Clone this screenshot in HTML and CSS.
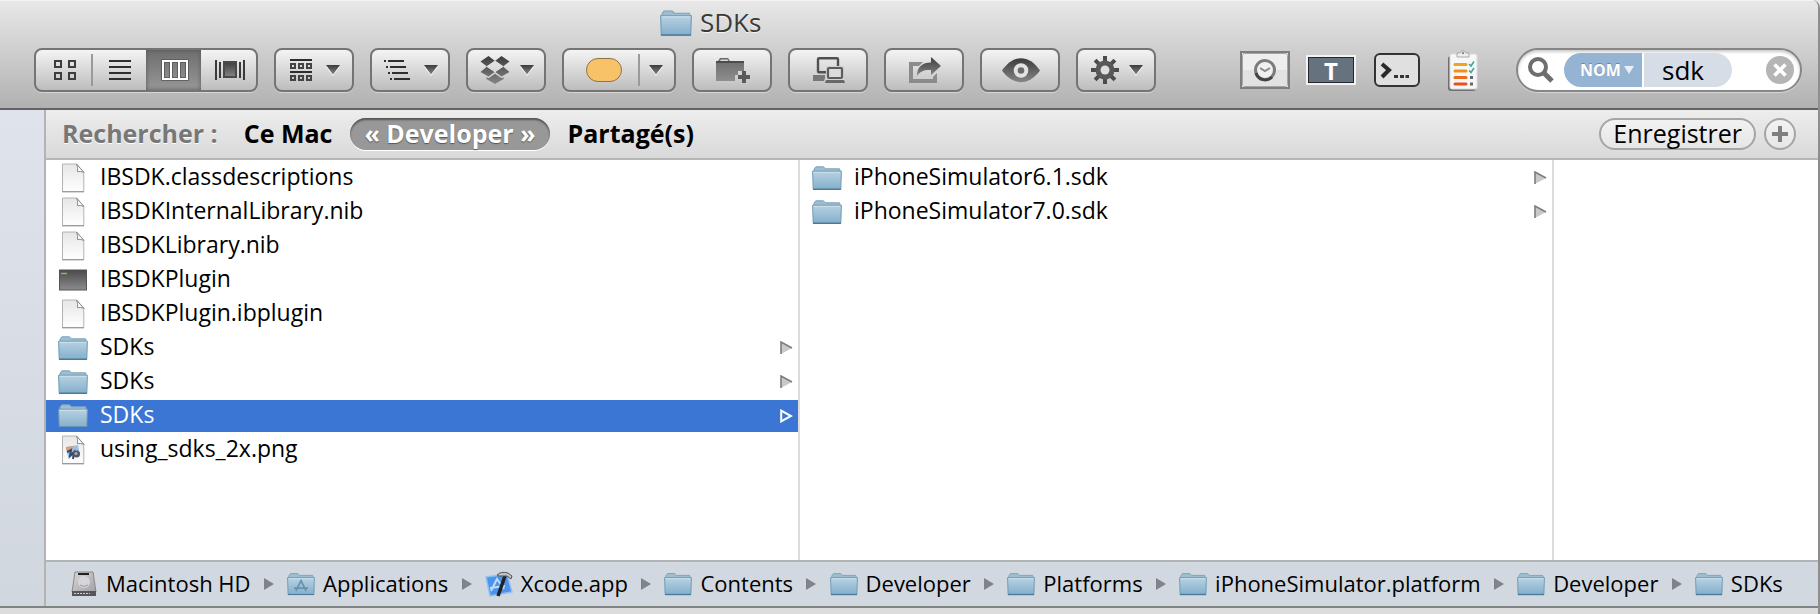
FILE: index.html
```html
<!DOCTYPE html>
<html lang="fr">
<head>
<meta charset="utf-8">
<title>SDKs</title>
<link rel="stylesheet" href="styles.css">
</head>
<body>
<svg class="defs" width="0" height="0" aria-hidden="true">
  <defs>
    <linearGradient id="g-folder" x1="0" y1="0" x2="0" y2="1"><stop offset="0" stop-color="#b7d2e3"/><stop offset="1" stop-color="#84afca"/></linearGradient>
    <linearGradient id="g-page" x1="0" y1="0" x2="0" y2="1"><stop offset="0" stop-color="#e6e6e6"/><stop offset="1" stop-color="#ffffff"/></linearGradient>
    <linearGradient id="g-ink" x1="0" y1="0" x2="0" y2="1"><stop offset="0" stop-color="#3c3c3c"/><stop offset="1" stop-color="#868686"/></linearGradient>
    <linearGradient id="g-soft" x1="0" y1="0" x2="0" y2="1"><stop offset="0" stop-color="#6a6a6a"/><stop offset="1" stop-color="#8e8e8e"/></linearGradient>
    <linearGradient id="g-exec" x1="0" y1="0" x2="0" y2="1"><stop offset="0" stop-color="#4a4a4a"/><stop offset="1" stop-color="#8c8c8c"/></linearGradient>
    <linearGradient id="g-disk" x1="0" y1="0" x2="1" y2="1"><stop offset="0" stop-color="#d8d8da"/><stop offset="1" stop-color="#a2a2a6"/></linearGradient>
    <symbol id="folder" viewBox="0 0 30 24">
      <path d="M2 6V3.2L3.8 .8H11.5L13.4 2.8H27.6L28.4 6Z" fill="#9dbdd0" stroke="#7da3ba"/>
      <path d="M.6 5.2H29.4L28.8 23.2H1.2Z" fill="url(#g-folder)" stroke="#6d9ab5"/>
      <path d="M1.6 6.3H28.4" stroke="#cfe1ec"/>
      <path d="M1 23.3H29" stroke="#477a9b" stroke-width="1.4"/>
    </symbol>
    <symbol id="page" viewBox="0 0 24 30">
      <path d="M1.500 1H15.500L22.800 9V28.600H1.500Z" fill="url(#g-page)" stroke="#b4b4b4"/>
      <path d="M1.200 28.800H23" stroke="#8f8f8f"/>
      <path d="M15.500 1Q17.400 5 16.400 8.600Q20 8 22.800 9.400Z" fill="#fff" stroke="#8d8d8d"/>
    </symbol>
    <symbol id="down" viewBox="0 0 14 11">
      <path d="M0 1.800H14L7 11Z" fill="#f4f4f4"/><path d="M0 0H14L7 9.500Z" fill="url(#g-ink)"/>
    </symbol>
    <symbol id="branch" viewBox="0 0 13 14">
      <path d="M1 1V13L12 7Z" fill="#c9c9c9"/><path d="M1 13V1L12 7" fill="none" stroke="#7d7d7d" stroke-width="1.600"/>
    </symbol>
    <symbol id="branch-on" viewBox="0 0 13 14"><path d="M1.200 1.600V12.400L11 7Z" fill="none" stroke="#fff" stroke-width="2"/></symbol>
    <symbol id="sep" viewBox="0 0 10 12"><path d="M0 0V12L10 6Z" fill="#808489"/></symbol>
  </defs>
</svg>

<main class="window">
  <header class="header">
    <h1 class="title"><svg class="title-icon"><use href="#folder"/></svg><span class="title-text">SDKs</span></h1>
    <div class="toolbar">
      <div class="tools">
        <div class="group" role="group" aria-label="Présentation">
          <button class="seg" aria-label="Icônes"><svg width="24" height="22" viewBox="0 0 24 22"><g fill="none" stroke="#3d3d3d" stroke-width="2"><path d="M2 2H8V8H2ZM16 2H22V8H16ZM2 14H8V20H2ZM16 14H22V20H16Z"/></g></svg></button>
          <button class="seg seg-rule" aria-label="Liste"><svg width="22" height="22" viewBox="0 0 22 22"><path d="M0 2H22M0 8H22M0 14H22M0 20H22" stroke="#2e2e2e" stroke-width="2"/></svg></button>
          <button class="seg seg-on" aria-label="Colonnes" aria-pressed="true"><svg width="28" height="22" viewBox="0 0 28 22"><path d="M2 2H26V20H2ZM10 2V20M18 2V20" fill="none" stroke="#555" stroke-width="3.600"/><path d="M2 2H26V20H2ZM10 2V20M18 2V20" fill="none" stroke="#fff" stroke-width="2"/></svg></button>
          <button class="seg" aria-label="Cover Flow"><svg width="30" height="22" viewBox="0 0 30 22"><path d="M1 1V21M5 3V19M25 3V19M29 1V21" stroke="#3a3a3a" stroke-width="2"/><path d="M9 3H21V18H9Z" fill="url(#g-ink)" stroke="#4a4a4a" stroke-width="2"/></svg></button>
        </div>
        <button class="tool" aria-label="Disposition" aria-haspopup="menu"><svg width="22" height="24" viewBox="0 0 22 24"><path d="M0 2H22M0 14H22" stroke="#2e2e2e" stroke-width="2"/><path d="M1 6H5V10H1ZM9 6H13V10H9ZM17 6H21V10H17ZM1 18H5V22H1ZM9 18H13V22H9ZM17 18H21V22H17Z" fill="none" stroke="#444" stroke-width="2"/></svg><svg class="down"><use href="#down"/></svg></button>
        <button class="tool" aria-label="Tri" aria-haspopup="menu"><svg width="26" height="22" viewBox="0 0 26 22"><path d="M0 2H2M4 2H20M2 8H4M6 8H22M4 14H6M8 14H24M6 20H8M10 20H26" stroke="#2e2e2e" stroke-width="2"/></svg><svg class="down"><use href="#down"/></svg></button>
        <button class="tool tool-tight" aria-label="Dropbox" aria-haspopup="menu"><svg width="30" height="28" viewBox="0 0 30 28"><g fill="url(#g-ink)"><path d="M8.500 0L15 5L7 10.500L.5 5.500ZM21.500 0L29.500 5.500L23 10.500L15 5ZM.5 16L7 10.500L15 15.800L8.500 20.500ZM23 10.500L29.500 16L21.500 20.500L15 15.800ZM6.500 21.300L8.600 22.300L15 17.800L21.500 22.300L23.600 21.300V23L15 28L6.500 23Z"/></g><path d="M7 10.500L15 5L23 10.500M7 10.500L15 15.800L23 10.500" fill="none" stroke="#e4e4e4"/></svg><svg class="down"><use href="#down"/></svg></button>
        <div class="group">
          <button class="seg seg-wide" aria-label="Étiquette"><span class="tag"></span></button>
          <button class="seg seg-menu seg-rule" aria-label="Choisir une étiquette" aria-haspopup="menu"><svg class="down"><use href="#down"/></svg></button>
        </div>
        <button class="tool" aria-label="Nouveau dossier"><svg width="34" height="27" viewBox="0 0 34 27"><path d="M0 24V4H2L4 1H12L14 4H28V14H22V18H19V24Z" fill="url(#g-soft)"/><path d="M3 5L5 2.500H11.500L13 5Z" fill="#d8d8d8"/><path d="M0 5H28" stroke="#4c4c4c" stroke-width="2"/><path d="M26 14H30V18H34V22H30V26H26V22H22V18H26Z" fill="#5a5a5a"/></svg></button>
        <button class="tool" aria-label="Se connecter"><svg width="32" height="27" viewBox="0 0 32 27"><rect x="5" y="1.200" width="20" height="14" rx="1" fill="none" stroke="#505050" stroke-width="2.400"/><rect x="13" y="9" width="18" height="16" fill="#d2d2d2"/><rect x="15" y="11" width="14" height="10" rx="1" fill="#dcdcdc" stroke="#5c5c5c" stroke-width="2.200"/><path d="M0 18H12V21L11 24H0Z" fill="#787878"/><path d="M13 23H31L32 26H12Z" fill="#686868"/></svg></button>
        <button class="tool" aria-label="Partager"><svg width="32" height="27" viewBox="0 0 32 27"><path d="M14 5H0V26H28V16L24 20V22H4V9H10Z" fill="#8b8b8b"/><path d="M8 19C8 10 13 5.500 22 5.500V0L32 9L22 18V13C16 12.500 11 14 8 19Z" fill="url(#g-ink)"/></svg></button>
        <button class="tool" aria-label="Coup d’œil"><svg width="38" height="25" viewBox="0 0 38 25"><path d="M0 12.500C11-4 27-4 38 12.500C27 28 11 28 0 12.500Z" fill="url(#g-ink)"/><circle cx="19" cy="12.500" r="5.300" fill="#6b6b6b" stroke="#e2e2e2" stroke-width="4"/></svg></button>
        <button class="tool tool-tight" aria-label="Action" aria-haspopup="menu"><svg width="28" height="28" viewBox="-14 -14 28 28"><g fill="#4c4c4c"><path id="tooth" d="M-2-14H2V14H-2Z"/><use href="#tooth" transform="rotate(45)"/><use href="#tooth" transform="rotate(90)"/><use href="#tooth" transform="rotate(135)"/><circle r="9.500" fill="#585858"/></g><circle r="4.500" fill="#dedede"/></svg><svg class="down"><use href="#down"/></svg></button>
      </div>
      <div class="extras">
        <button class="plain" aria-label="Time Machine"><svg width="50" height="38" viewBox="0 0 50 38"><rect x="1" y="1" width="48" height="36" fill="#eee" stroke="#7e7e7e" stroke-width="2"/><rect x="2.500" y="2.500" width="45" height="33" rx="2" fill="none" stroke="#a6a6a6"/><rect x="3" y="19" width="44" height="16" fill="#e2e2e2"/><circle cx="25" cy="19" r="9.500" fill="#f0f0f0" stroke="#7c7c7c" stroke-width="3"/><path d="M16 22A9.500 9.500 0 0 0 32 26" fill="none" stroke="#444" stroke-width="3"/><path d="M20 17L25 20L30 17" fill="none" stroke="#8a8a8a" stroke-width="2"/></svg></button>
        <button class="plain plain-text" aria-label="Texte">T</button>
        <button class="plain plain-term" aria-label="Terminal"><svg width="46" height="34" viewBox="0 0 46 34"><rect x="1" y="1" width="44" height="32" rx="5" fill="#e0e0e0" stroke="#333" stroke-width="2"/><path d="M8 11L15 17L8 24" fill="none" stroke="#2a2a2a" stroke-width="4"/><path d="M20 23.500H24M26 23.500H30M31.500 23.500H35" stroke="#333" stroke-width="3"/></svg></button>
        <button class="plain plain-list" aria-label="Tâches"><svg width="30" height="43" viewBox="0 0 30 43"><rect x="0" y="7" width="28" height="35" rx="3" fill="#707070"/><rect x="2" y="5" width="27" height="35" rx="2" fill="#f7f7f7" stroke="#ddd"/><path d="M9 8V4H12Q15-1 18 4H21V8Z" fill="#eee" stroke="#aaa"/><circle cx="15" cy="4" r="1.200" fill="#888"/><g stroke-width="3" stroke-linecap="round"><path d="M7 15.500H18" stroke="#f3a21c"/><path d="M7 22H18" stroke="#f0901c"/><path d="M7 28.500H18" stroke="#ec6a1e"/><path d="M7 35H18" stroke="#e8511e"/></g><path d="M21 15L23 17L26 12.500M21 21.500L23 23.500L26 19" fill="none" stroke="#35a79c" stroke-width="1.500"/><path d="M22 27H25V30H22ZM22 33.500H25V36.500H22Z" fill="#666"/></svg></button>
        <form class="search" role="search">
          <svg class="glass" width="26" height="26" viewBox="0 0 26 26"><circle cx="10" cy="10" r="8" fill="none" stroke="#6e6e6e" stroke-width="4"/><path d="M15.500 15.500L24 24" stroke="#6e6e6e" stroke-width="5"/></svg>
          <label class="scope-token"><select class="scope-select" aria-label="Critère"><option>NOM</option></select><svg class="token-arrow" width="10" height="8" viewBox="0 0 10 8"><path d="M0 0H10L5 8Z" fill="#e6eef6"/></svg></label>
          <input class="query" type="text" value="sdk" aria-label="Rechercher">
          <button class="clear" type="button" aria-label="Effacer"><svg width="28" height="28" viewBox="0 0 28 28"><circle cx="14" cy="14" r="14" fill="#b5b5b5"/><path d="M8.500 8.500L19.500 19.500M19.500 8.500L8.500 19.500" stroke="#fff" stroke-width="3.600"/></svg></button>
        </form>
      </div>
    </div>
  </header>

  <div class="body">
    <aside class="sidebar"></aside>
    <section class="content">
      <div class="scopes">
        <span class="scopes-label">Rechercher :</span>
        <button class="scope">Ce Mac</button>
        <button class="scope scope-on" aria-pressed="true">« Developer »</button>
        <button class="scope">Partagé(s)</button>
        <button class="save">Enregistrer</button>
        <button class="add" aria-label="Ajouter un critère"><svg width="16" height="16" viewBox="0 0 16 16"><path d="M8 0V16M0 8H16" stroke="#7f7f7f" stroke-width="4"/></svg></button>
      </div>
      <div class="columns">
        <ul class="column">
          <li><a class="row" href="#"><svg class="icon icon-page"><use href="#page"/></svg><span class="name">IBSDK.classdescriptions</span></a></li>
          <li><a class="row" href="#"><svg class="icon icon-page"><use href="#page"/></svg><span class="name">IBSDKInternalLibrary.nib</span></a></li>
          <li><a class="row" href="#"><svg class="icon icon-page"><use href="#page"/></svg><span class="name">IBSDKLibrary.nib</span></a></li>
          <li><a class="row" href="#"><svg class="icon" viewBox="0 0 30 24"><rect x="1.500" y="2" width="27" height="20" fill="url(#g-exec)" stroke="#555"/><path d="M3 5.500H9" stroke="#7fb86c" stroke-width="1.500"/></svg><span class="name">IBSDKPlugin</span></a></li>
          <li><a class="row" href="#"><svg class="icon icon-page"><use href="#page"/></svg><span class="name">IBSDKPlugin.ibplugin</span></a></li>
          <li><a class="row" href="#"><svg class="icon"><use href="#folder"/></svg><span class="name">SDKs</span><svg class="branch"><use href="#branch"/></svg></a></li>
          <li><a class="row" href="#"><svg class="icon"><use href="#folder"/></svg><span class="name">SDKs</span><svg class="branch"><use href="#branch"/></svg></a></li>
          <li><a class="row row-on" href="#" aria-current="true"><svg class="icon"><use href="#folder"/></svg><span class="name">SDKs</span><svg class="branch"><use href="#branch-on"/></svg></a></li>
          <li><a class="row" href="#"><svg class="icon icon-page" viewBox="0 0 24 30"><use href="#page"/><path d="M5 12L17 10L19 20L7 22Z" fill="#9fbfe6"/><path d="M5 12L13 11L11 14L5 15Z" fill="#d9a06c"/><path d="M6 17L10 15L9 21L13 17L12 24" fill="none" stroke="#36486b" stroke-width="2"/><circle cx="15.500" cy="19" r="3.500" fill="#55585f"/><circle cx="15" cy="18.500" r="1.500" fill="#aab"/></svg><span class="name">using_sdks_2x.png</span></a></li>
        </ul>
        <ul class="column">
          <li><a class="row" href="#"><svg class="icon"><use href="#folder"/></svg><span class="name">iPhoneSimulator6.1.sdk</span><svg class="branch"><use href="#branch"/></svg></a></li>
          <li><a class="row" href="#"><svg class="icon"><use href="#folder"/></svg><span class="name">iPhoneSimulator7.0.sdk</span><svg class="branch"><use href="#branch"/></svg></a></li>
        </ul>
        <ul class="column column-last"></ul>
      </div>
      <nav class="path" aria-label="Chemin">
        <a class="crumb" href="#"><svg class="crumb-icon" viewBox="0 0 28 26"><path d="M5 1H23L26 21H2Z" fill="url(#g-disk)" stroke="#888"/><path d="M2 20H26V25H2Z" fill="#56565a"/><path d="M4 22.500H20" stroke="#ccc" stroke-dasharray="2 1"/><path d="M8 3H19" stroke="#222" stroke-width="2"/><circle cx="14" cy="11" r="6" fill="#d6d6da"/><path d="M10 14Q14 17 18 14" fill="none" stroke="#999"/></svg><span class="crumb-text">Macintosh HD</span></a>
        <svg class="sep"><use href="#sep"/></svg>
        <a class="crumb" href="#"><svg class="crumb-icon" viewBox="0 0 30 24"><use href="#folder"/><path d="M9.500 19.500L15 8.500L20.500 19.500M7.500 16.500H22.500" fill="none" stroke="#6692ad" stroke-width="1.800"/></svg><span class="crumb-text">Applications</span></a>
        <svg class="sep"><use href="#sep"/></svg>
        <a class="crumb" href="#"><svg class="crumb-icon" viewBox="0 0 28 26"><path d="M1 6L22 3L27 21L5 25Z" fill="#4d94e8" stroke="#8fc0f5" stroke-width="1.500"/><path d="M6 20L12 8L19 18M5 17L20 15" fill="none" stroke="#b9dbff" stroke-width="2"/><path d="M13 25L20 5" stroke="#222" stroke-width="3.500"/><path d="M12 4Q16 0 23 2L27 5L26 8L22 5L14 5Z" fill="#c2c2c2" stroke="#555"/></svg><span class="crumb-text">Xcode.app</span></a>
        <svg class="sep"><use href="#sep"/></svg>
        <a class="crumb" href="#"><svg class="crumb-icon"><use href="#folder"/></svg><span class="crumb-text">Contents</span></a>
        <svg class="sep"><use href="#sep"/></svg>
        <a class="crumb" href="#"><svg class="crumb-icon"><use href="#folder"/></svg><span class="crumb-text">Developer</span></a>
        <svg class="sep"><use href="#sep"/></svg>
        <a class="crumb" href="#"><svg class="crumb-icon"><use href="#folder"/></svg><span class="crumb-text">Platforms</span></a>
        <svg class="sep"><use href="#sep"/></svg>
        <a class="crumb" href="#"><svg class="crumb-icon"><use href="#folder"/></svg><span class="crumb-text">iPhoneSimulator.platform</span></a>
        <svg class="sep"><use href="#sep"/></svg>
        <a class="crumb" href="#"><svg class="crumb-icon"><use href="#folder"/></svg><span class="crumb-text">Developer</span></a>
        <svg class="sep"><use href="#sep"/></svg>
        <a class="crumb" href="#"><svg class="crumb-icon"><use href="#folder"/></svg><span class="crumb-text">SDKs</span></a>
      </nav>
    </section>
  </div>
  <footer class="footer"></footer>
</main>
</body>
</html>
```

FILE: styles.css
```css
* { box-sizing: border-box; }

body {
  margin: 0;
  background: #e9e9e9;
  font-family: "Open Sans", "Noto Sans", sans-serif;
  font-size: 23px;
  font-weight: 500;
  color: #000;
}

button, input, select { font: inherit; color: inherit; margin: 0; padding: 0; border: 0; background: none; }
button { display: flex; align-items: center; justify-content: center; }
svg { display: block; flex: none; }
ul { margin: 0; padding: 0; list-style: none; }
a { color: inherit; text-decoration: none; }

.defs { position: absolute; }

.window {
  display: flex;
  flex-direction: column;
  min-height: 100vh;
  border-right: 2px solid #8e8e8e;
  border-top-right-radius: 8px;
  overflow: hidden;
}

/* Title bar and toolbar */
.header {
  border-top: 1px solid #f4f4f4;
  border-bottom: 2px solid #636363;
  background: linear-gradient(#e8e8e8, #b1b1b1);
}
.title {
  display: flex;
  align-items: center;
  gap: 8px;
  height: 43px;
  margin: 0;
  padding-left: 660px;
  font-size: 26px;
  font-weight: 500;
  color: #3a3a3a;
  text-shadow: 0 1px 0 #f4f4f4;
}
.title-icon { width: 32px; height: 26px; }
.title-text { padding-bottom: 2px; }

.toolbar {
  display: flex;
  justify-content: space-between;
  align-items: center;
  padding: 4px 16px 16px 34px;
}
.tools, .extras { display: flex; align-items: center; gap: 16px; }

.tool, .group {
  height: 44px;
  border: 2px solid #747474;
  border-radius: 8px;
  background: linear-gradient(#f4f4f4, #bdbdbd);
  box-shadow: 0 1px 0 #d6d6d6;
}
.tool { width: 80px; gap: 14px; padding-left: 2px; }
.tool-tight { gap: 10px; }
.group { display: flex; }
.seg { width: 55px; padding-left: 2px; }
.seg-rule { background: linear-gradient(#9a9a9a, #9a9a9a) left center / 2px 32px no-repeat; }
.seg-on { background: linear-gradient(#6e6e6e, #979797); box-shadow: inset 0 0 4px #555; }
.seg-wide { width: 74px; padding-left: 6px; }
.seg-menu { width: 36px; padding-left: 0; }
.down { width: 14px; height: 11px; }
.tag {
  width: 36px;
  height: 24px;
  border: 1px solid #8d7448;
  border-radius: 12px;
  background: #f8c268;
}

.plain-text {
  width: 50px;
  height: 30px;
  border: 2px solid #f2f2f2;
  background: #66737f;
  box-shadow: inset 0 0 0 1px #23282d;
  color: #fff;
  font-size: 24px;
  font-weight: 700;
}
.plain-term { padding-left: 2px; }
.plain-list { padding: 0 22px 0 12px; }

.search {
  display: flex;
  align-items: center;
  width: 286px;
  height: 44px;
  padding: 0 6px 0 10px;
  border: 2px solid #868686;
  border-radius: 22px;
  background: #fff;
  box-shadow: inset 0 2px 3px #ccc, 0 1px 0 #d6d6d6;
}
.scope-token {
  display: flex;
  align-items: center;
  gap: 4px;
  width: 78px;
  height: 34px;
  margin: 0 2px 0 10px;
  padding-left: 16px;
  border-radius: 17px 0 0 17px;
  background: #95b3d3;
}
.scope-select {
  appearance: none;
  width: 40px;
  color: #fff;
  font-size: 16px;
  font-weight: 700;
  text-shadow: 0 -1px 0 #6d87a3;
}
.query {
  width: 88px;
  height: 34px;
  margin-right: auto;
  padding-left: 18px;
  border-radius: 0 17px 17px 0;
  background: #d6dde6;
  font-size: 26px;
}

/* Content area */
.body { display: flex; flex: 1; }
.sidebar { width: 46px; border-right: 2px solid #b3b3b3; background: linear-gradient(#dfe3eb, #d1d7df); }
.content { display: flex; flex: 1; flex-direction: column; min-width: 0; }

.scopes {
  display: flex;
  align-items: center;
  height: 50px;
  padding: 0 22px 0 16px;
  border-bottom: 2px solid #b6b6b6;
  background: linear-gradient(#ededed, #d9d9d9);
  font-size: 25px;
  line-height: 32px;
}
.scopes-label { margin-right: 26px; padding-bottom: 3px; font-weight: 700; color: #777; text-shadow: 0 1px 0 #fff; }
.scope, .save { height: 32px; padding-bottom: 3px; }
.scope { font-weight: 700; }
.scope-on {
  margin: 0 18px;
  padding: 0 14px 3px;
  border-radius: 16px;
  background: #989898;
  box-shadow: inset 0 2px 2px #555, 0 1px 0 #fff;
  color: #fff;
  text-shadow: 0 1px 1px #555;
}
.save, .add { height: 32px; border: 2px solid #a5a5a5; border-radius: 16px; background: linear-gradient(#f2f2f2, #e6e6e6); }
.save { margin: 0 8px 0 auto; padding: 0 12px 3px; }
.add { width: 32px; }

.columns { display: grid; grid-template-columns: 754fr 754fr 264fr; flex: 1; background: #fff; }
.column {
  display: flex;
  flex-direction: column;
  gap: 2px;
  padding-top: 2px;
  border-right: 2px solid #dcdcdc;
}
.column-last { border-right: 0; }
.row { display: flex; align-items: center; height: 32px; padding: 0 5px 0 12px; }
.row-on { background: #3c76d4; color: #fff; }
.icon { width: 30px; height: 24px; margin-right: 12px; }
.icon-page { height: 30px; }
.name { flex: 1; padding-bottom: 4px; }
.branch { width: 13px; height: 14px; }

.path {
  display: flex;
  align-items: center;
  justify-content: space-between;
  height: 46px;
  padding: 0 35px 0 24px;
  border-top: 2px solid #b0b4b4;
  background: #d2d8e0;
  font-size: 22px;
  white-space: nowrap;
}
.crumb { display: flex; align-items: center; gap: 8px; }
.crumb-icon { width: 28px; height: 26px; }
.crumb-text { padding-bottom: 3px; }
.sep { width: 10px; height: 12px; }

.footer { height: 8px; border-top: 2px solid #7f8381; background: #dcdcdc; }
```
